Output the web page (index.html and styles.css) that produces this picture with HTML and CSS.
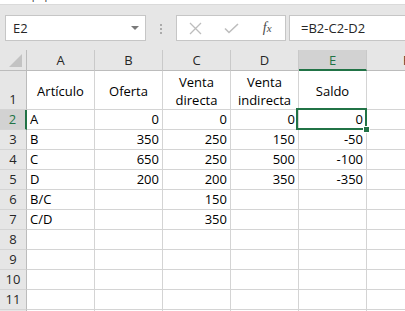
FILE: index.html
```html
<!doctype html>
<html>
<head>
<meta charset="UTF-8">
<title>Libro1 - Excel</title>
<link rel="stylesheet" href="styles.css">
</head>
<body>
<div class="ribbon-tail"><span class="group-label">Portapapeles</span></div>

<div class="formula-bar">
  <div class="name-box"><span>E2</span><span class="dropdown"></span></div>
  <div class="grip"><i></i><i></i><i></i></div>
  <div class="fx-box">
    <span class="fx-btn">
      <svg width="13" height="13" viewBox="0 0 13 13"><path d="M1 1 L12 12 M12 1 L1 12" stroke="#bdbdbd" stroke-width="1.3" fill="none"/></svg>
    </span>
    <span class="fx-btn">
      <svg width="15" height="11" viewBox="0 0 15 11"><path d="M1 5.5 L5 9.5 L14 1" stroke="#bdbdbd" stroke-width="1.6" fill="none"/></svg>
    </span>
    <span class="fx-btn fx">f<small>x</small></span>
  </div>
  <div class="formula-input">=B2-C2-D2</div>
</div>

<div class="sheet">
  <div class="corner"><svg width="13" height="13" viewBox="0 0 13 13"><polygon points="13,0 13,13 0,13" fill="#c3c3c3"/></svg></div>
  <div class="colhead">A</div>
  <div class="colhead">B</div>
  <div class="colhead">C</div>
  <div class="colhead">D</div>
  <div class="colhead sel">E</div>
  <div class="colhead last">F</div>

  <div class="rowhead tall">1</div>
  <div class="cell title">Artículo</div>
  <div class="cell title">Oferta</div>
  <div class="cell title">Venta<br>directa</div>
  <div class="cell title">Venta<br>indirecta</div>
  <div class="cell title">Saldo</div>
  <div class="cell"></div>

  <div class="rowhead sel">2</div>
  <div class="cell">A</div>
  <div class="cell num">0</div>
  <div class="cell num">0</div>
  <div class="cell num">0</div>
  <div class="cell num active">0<span class="selection"><span class="fill-handle"></span></span></div>
  <div class="cell"></div>

  <div class="rowhead">3</div>
  <div class="cell">B</div>
  <div class="cell num">350</div>
  <div class="cell num">250</div>
  <div class="cell num">150</div>
  <div class="cell num">-50</div>
  <div class="cell"></div>

  <div class="rowhead">4</div>
  <div class="cell">C</div>
  <div class="cell num">650</div>
  <div class="cell num">250</div>
  <div class="cell num">500</div>
  <div class="cell num">-100</div>
  <div class="cell"></div>

  <div class="rowhead">5</div>
  <div class="cell">D</div>
  <div class="cell num">200</div>
  <div class="cell num">200</div>
  <div class="cell num">350</div>
  <div class="cell num">-350</div>
  <div class="cell"></div>

  <div class="rowhead">6</div>
  <div class="cell">B/C</div>
  <div class="cell"></div>
  <div class="cell num">150</div>
  <div class="cell"></div>
  <div class="cell"></div>
  <div class="cell"></div>

  <div class="rowhead">7</div>
  <div class="cell">C/D</div>
  <div class="cell"></div>
  <div class="cell num">350</div>
  <div class="cell"></div>
  <div class="cell"></div>
  <div class="cell"></div>

  <div class="rowhead">8</div>
  <div class="cell"></div><div class="cell"></div><div class="cell"></div><div class="cell"></div><div class="cell"></div><div class="cell"></div>
  <div class="rowhead">9</div>
  <div class="cell"></div><div class="cell"></div><div class="cell"></div><div class="cell"></div><div class="cell"></div><div class="cell"></div>
  <div class="rowhead">10</div>
  <div class="cell"></div><div class="cell"></div><div class="cell"></div><div class="cell"></div><div class="cell"></div><div class="cell"></div>
  <div class="rowhead">11</div>
  <div class="cell"></div><div class="cell"></div><div class="cell"></div><div class="cell"></div><div class="cell"></div><div class="cell"></div>
  <div class="rowhead"></div>
  <div class="cell"></div><div class="cell"></div><div class="cell"></div><div class="cell"></div><div class="cell"></div><div class="cell"></div>
</div>
</body>
</html>
```

FILE: styles.css
```css
body { margin: 0; overflow: hidden; width: 405px; height: 311px; background: #e6e6e6; font-family: "Open Sans", "Noto Sans", sans-serif; font-size: 13px; color: #000; }

.ribbon-tail { height: 4px; background: #fff; border-bottom: 1px solid #dadada; overflow: hidden; }
.group-label { display: block; margin: -12px 0 0 4px; font-size: 11px; line-height: 14px; color: #444; }

.formula-bar { display: flex; align-items: flex-start; height: 45px; padding: 10px 0 0 5px; box-sizing: border-box; }
.name-box { display: flex; align-items: center; justify-content: space-between; width: 141px; height: 26px; box-sizing: border-box; padding: 0 6px 0 7px; background: #fff; border: 1px solid #c6c6c6; color: #262626; }
.dropdown { width: 0; height: 0; border-left: 4px solid transparent; border-right: 4px solid transparent; border-top: 4px solid #7a7a7a; }
.grip { display: flex; flex-direction: column; align-items: center; gap: 2px; width: 30px; padding-top: 9px; }
.grip i { display: block; width: 2px; height: 2px; background: #ababab; }
.fx-box { display: flex; align-items: center; width: 110px; height: 26px; box-sizing: border-box; padding-left: 1px; background: #fff; border: 1px solid #c6c6c6; margin-right: 3px; }
.fx-btn { display: flex; align-items: center; justify-content: center; width: 36px; height: 100%; }
.fx { font-family: "Liberation Serif", serif; font-style: italic; font-size: 14px; color: #4a4a4a; }
.fx small { font-size: 11px; }
.formula-input { flex: 1; height: 26px; box-sizing: border-box; padding-left: 11px; background: #fff; border: 1px solid #c6c6c6; border-right: none; line-height: 24px; color: #262626; }

.sheet { display: grid; width: 435px; grid-template-columns: 27px repeat(6, 68px); grid-template-rows: 21px 39px repeat(11, 20px); background: #fff; }
.sheet > div { box-sizing: border-box; white-space: nowrap; }

.corner { display: flex; align-items: flex-end; justify-content: flex-end; padding: 0 4px 3px 0; background: #e6e6e6; border-right: 1px solid #bcbcbc; border-bottom: 1px solid #bcbcbc; }
.colhead { background: #e6e6e6; border-right: 1px solid #c9c9c9; border-bottom: 1px solid #bcbcbc; text-align: center; line-height: 20px; color: #262626; }
.colhead.sel { background: #d2d2d2; color: #217346; border-bottom: 2px solid #217346; }
.colhead.last { text-align: left; padding-left: 36px; }

.rowhead { background: #e6e6e6; border-right: 1px solid #bcbcbc; border-bottom: 1px solid #d4d4d4; text-align: center; line-height: 19px; color: #262626; }
.rowhead.tall { display: flex; align-items: flex-end; justify-content: center; }
.rowhead.sel { background: #d2d2d2; color: #217346; border-right: 2px solid #217346; }

.cell { border-right: 1px solid #d4d4d4; border-bottom: 1px solid #d4d4d4; padding: 0 3px; line-height: 19px; }
.cell.num { text-align: right; }
.cell.title { display: flex; align-items: center; justify-content: center; text-align: center; line-height: 18px; padding-top: 1px; }

.active { position: relative; }
.selection { position: absolute; left: -3px; top: -2px; width: 71px; height: 22px; box-sizing: border-box; border: 2px solid #217346; }
.fill-handle { position: absolute; right: -5px; bottom: -5px; width: 7px; height: 7px; box-sizing: border-box; background: #217346; border: 1px solid #fff; }
```
